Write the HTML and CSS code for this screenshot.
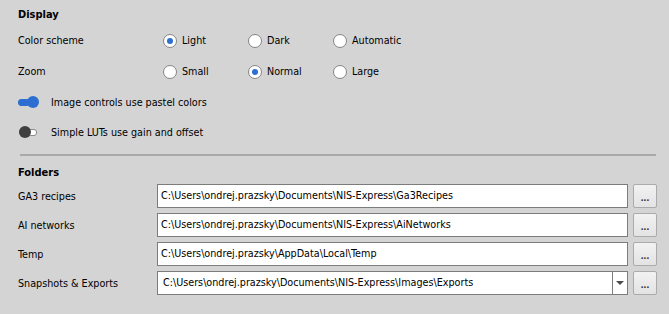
FILE: index.html
```html
<!DOCTYPE html>
<html lang="en">
<head>
    <meta charset="UTF-8">
    <title>Preferences</title>
    <link rel="stylesheet" href="styles.css">
</head>
<body>
    <div class="page">
        <h2 class="group-title">Display</h2>

        <div class="row radio-row">
            <span class="label">Color scheme</span>
            <div class="options">
                <label class="radio checked"><span class="dot"></span>Light</label>
                <label class="radio"><span class="dot"></span>Dark</label>
                <label class="radio"><span class="dot"></span>Automatic</label>
            </div>
        </div>

        <div class="row radio-row">
            <span class="label">Zoom</span>
            <div class="options">
                <label class="radio"><span class="dot"></span>Small</label>
                <label class="radio checked"><span class="dot"></span>Normal</label>
                <label class="radio"><span class="dot"></span>Large</label>
            </div>
        </div>

        <div class="row toggle-row">
            <span class="toggle on"><span class="knob"></span></span>
            <span>Image controls use pastel colors</span>
        </div>

        <div class="row toggle-row">
            <span class="toggle"><span class="knob"></span></span>
            <span>Simple LUTs use gain and offset</span>
        </div>

        <div class="separator"></div>

        <h2 class="group-title folders-title">Folders</h2>

        <div class="folders">
            <div class="folder-row">
                <span class="label">GA3 recipes</span>
                <div class="path">C:\Users\ondrej.prazsky\Documents\NIS-Express\Ga3Recipes</div>
                <button class="browse">...</button>
            </div>
            <div class="folder-row">
                <span class="label">AI networks</span>
                <div class="path">C:\Users\ondrej.prazsky\Documents\NIS-Express\AiNetworks</div>
                <button class="browse">...</button>
            </div>
            <div class="folder-row">
                <span class="label">Temp</span>
                <div class="path">C:\Users\ondrej.prazsky\AppData\Local\Temp</div>
                <button class="browse">...</button>
            </div>
            <div class="folder-row">
                <span class="label">Snapshots &amp; Exports</span>
                <div class="path combo">
                    <span class="combo-text">C:\Users\ondrej.prazsky\Documents\NIS-Express\Images\Exports</span>
                    <span class="combo-arrow"></span>
                </div>
                <button class="browse">...</button>
            </div>
        </div>
    </div>
</body>
</html>
```

FILE: styles.css
```css
body {
    margin: 0;
    background: #d4d4d4;
    font-family: 'DejaVu Sans Condensed', 'Liberation Sans', sans-serif;
    font-size: 10.7px;
    color: #000;
}

.page {
    padding: 7px 12px 0 18px;
}

.group-title {
    margin: 0 0 2px;
    font-size: 11px;
    line-height: 16px;
    font-weight: bold;
}

.row {
    display: flex;
    align-items: center;
}

.radio-row {
    height: 31px;
}

.toggle-row {
    height: 30px;
    gap: 13px;
}

.label {
    width: 139px;
    flex-shrink: 0;
}

.options {
    display: flex;
    padding-left: 6px;
}

.radio {
    width: 85px;
    display: flex;
    align-items: center;
    gap: 5px;
}

.dot {
    width: 12px;
    height: 12px;
    border: 1px solid #858585;
    border-radius: 50%;
    background: #fff;
    position: relative;
}

.radio.checked .dot::after {
    content: "";
    position: absolute;
    left: 3px;
    top: 3px;
    width: 6px;
    height: 6px;
    border-radius: 50%;
    background: #2d6fd0;
}

.toggle {
    width: 20px;
    height: 12px;
    position: relative;
}

.toggle::before {
    content: "";
    position: absolute;
    left: 1px;
    right: 1px;
    top: 3px;
    height: 5px;
    border-radius: 3px;
    background: #fff;
    border: 1px solid #8a8a8a;
}

.toggle .knob {
    position: absolute;
    left: 1px;
    top: 0;
    width: 12px;
    height: 12px;
    border-radius: 50%;
    background: #404040;
}

.toggle.on::before {
    background: #2d6fd0;
    border-color: #2d6fd0;
    right: 8px;
    left: 0;
}

.toggle.on .knob {
    left: 9px;
    background: #2d6fd0;
}

.separator {
    height: 2px;
    background: #a9a9a9;
    margin: 7px 1px 0 2px;
}

.folders-title {
    margin-top: 9px;
    margin-bottom: 3px;
}

.folders {
    display: flex;
    flex-direction: column;
    gap: 5px;
}

.folder-row {
    display: flex;
    align-items: center;
}

.path {
    flex: 1;
    height: 22px;
    line-height: 22px;
    background: #fff;
    border: 1px solid #7c7c7c;
    padding-left: 3px;
    white-space: nowrap;
    overflow: hidden;
}

.combo {
    display: flex;
    padding-left: 5px;
}

.combo-text {
    flex: 1;
}

.combo-arrow {
    width: 14px;
    border-left: 1px solid #7c7c7c;
    position: relative;
}

.combo-arrow::after {
    content: "";
    position: absolute;
    left: 3px;
    top: 9px;
    border-left: 4px solid transparent;
    border-right: 4px solid transparent;
    border-top: 4px solid #4a4a4a;
}

.browse {
    width: 24px;
    height: 24px;
    margin-left: 5px;
    padding: 0;
    border: 1px solid #ababab;
    border-radius: 2px;
    background: linear-gradient(#f2f2f2, #e3e3e3);
    font-family: 'Liberation Sans', Arial, sans-serif;
    font-size: 10px;
    font-weight: bold;
    color: #333;
    line-height: 26px;
}
```
